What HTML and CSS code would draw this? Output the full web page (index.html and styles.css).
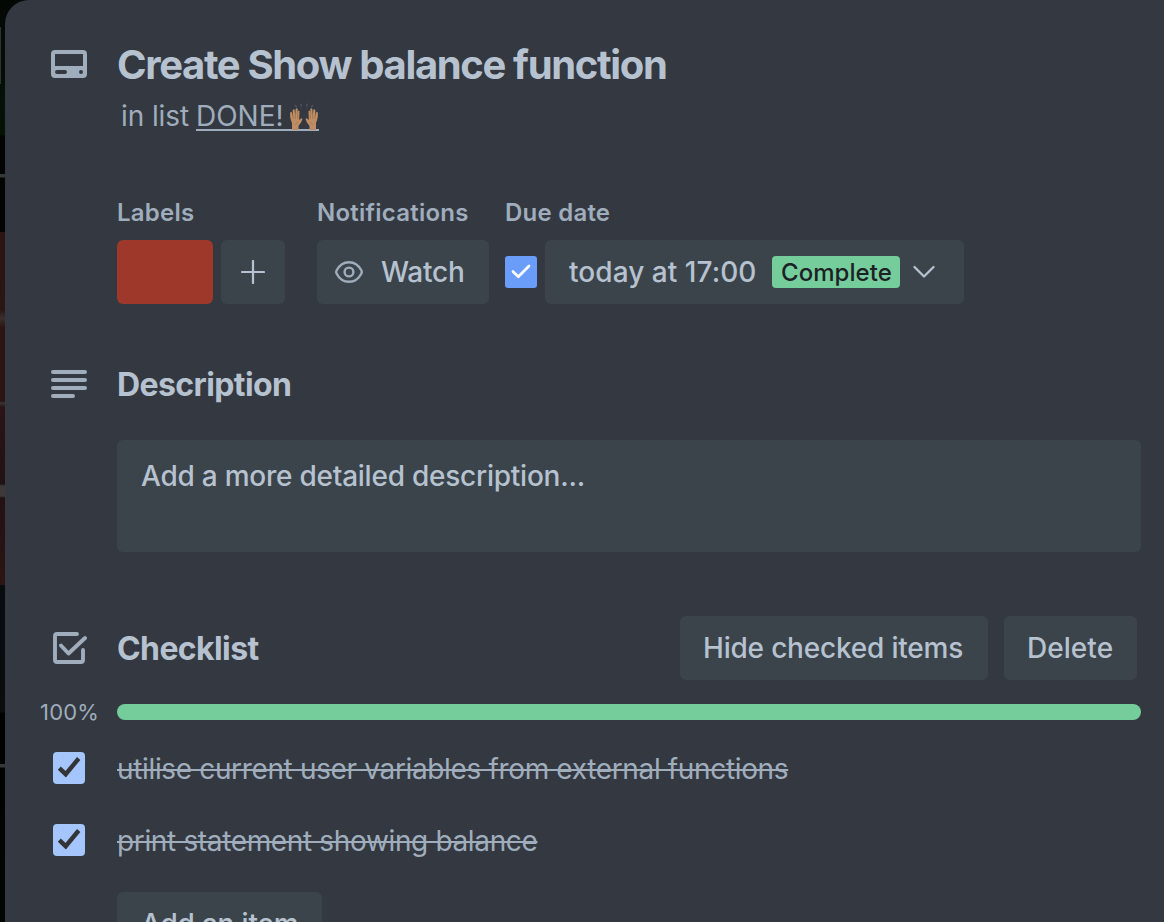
FILE: index.html
```html
<!DOCTYPE html>
<html lang="en">
<head>
<meta charset="utf-8">
<title>Create Show balance function</title>
<link rel="stylesheet" href="styles.css">
</head>
<body>
<div class="board"></div>
<main class="card">
  <header class="head">
    <svg class="icon card-icon" width="36" height="28" viewBox="0 0 36 28"><path fill="currentColor" fill-rule="evenodd" d="M4 0h28a4 4 0 0 1 4 4v20a4 4 0 0 1-4 4H4a4 4 0 0 1-4-4V4a4 4 0 0 1 4-4zM4 4v12h28V4zM6 20a2 2 0 0 0 0 4h8a2 2 0 0 0 0-4zM30 20a2 2 0 1 0 0 4a2 2 0 0 0 0-4z"/></svg>
    <div>
      <h1 class="title">Create Show balance function</h1>
      <p class="in-list"><span class="in">in list </span><a class="list-link"><span>DONE!</span>
        <svg class="hands" width="30" height="30" viewBox="0 0 30 30"><g stroke="#555b60" stroke-width="1.2" stroke-linecap="round"><path d="M6.500 3.500l1 1.500M12 2l.3 2M18 2l-.3 2M23.500 3.500l-1 1.500"/></g><path fill="#be8d63" d="M3 28V21C1.500 18 .8 14 1.200 10.500q.8-1.300 1.700 0l.7 4L3.700 8q1-1.600 2 0l.6 6L6.600 7q1.100-1.600 2.100 0v7.500L9 9q1-1.200 1.500.2L10.200 18l1.800-1.500q1.500-.6 1.300.9C12.500 20 10.500 22.500 9.500 24V28z"/><path d="M3.700 13l.6 4M6.400 13v4M8.900 13l-.2 4M9 20q-2 1-2.500 3" fill="none" stroke="#97683f" stroke-width=".5"/><g transform="matrix(-1 0 0 1 30 0)"><path fill="#be8d63" d="M3 28V21C1.500 18 .8 14 1.200 10.500q.8-1.300 1.700 0l.7 4L3.700 8q1-1.600 2 0l.6 6L6.600 7q1.100-1.600 2.100 0v7.500L9 9q1-1.200 1.500.2L10.200 18l1.800-1.500q1.500-.6 1.300.9C12.500 20 10.500 22.500 9.500 24V28z"/><path d="M3.700 13l.6 4M6.400 13v4M8.900 13l-.2 4M9 20q-2 1-2.500 3" fill="none" stroke="#97683f" stroke-width=".5"/></g></svg></a></p>
    </div>
  </header>

  <section class="meta">
    <div class="group">
      <h3 class="label">Labels</h3>
      <div class="row"><span class="swatch"></span><button class="btn add"><svg width="24" height="24" viewBox="0 0 24 24"><path d="M12 1v22M1 12h22" stroke="currentColor" stroke-width="2.200" stroke-linecap="round"/></svg></button></div>
    </div>
    <div class="group">
      <h3 class="label">Notifications</h3>
      <button class="btn watch"><svg class="icon" width="28" height="24" viewBox="0 0 28 24" fill="none" stroke="currentColor" stroke-width="2.400"><path d="M14 2.200C20 2.200 24 6 26.300 10.300Q27.200 12 26.300 13.700C24 18 20 21.800 14 21.800S4 18 1.700 13.700Q.8 12 1.700 10.300C4 6 8 2.200 14 2.200z"/><circle cx="14" cy="12" r="4.400"/></svg><span class="watch-text">Watch</span></button>
    </div>
    <div class="group">
      <h3 class="label">Due date</h3>
      <div class="row"><span class="check due-check"><svg width="32" height="32" viewBox="0 0 32 32"><path d="M8 15.500l5.300 5.200L24 10" fill="none" stroke="#fff" stroke-width="2.700" stroke-linecap="round" stroke-linejoin="round"/></svg></span><button class="btn due"><span class="due-text">today at 17:00</span><span class="badge">Complete</span><svg width="24" height="14" viewBox="0 0 24 14"><path d="M2.500 2L12 11.500L21.500 2" fill="none" stroke="currentColor" stroke-width="2.300" stroke-linecap="round" stroke-linejoin="round"/></svg></button></div>
    </div>
  </section>

  <section class="heading desc-heading">
    <svg class="icon" width="36" height="28" viewBox="0 0 36 28"><path d="M2 2h32M2 10h32M2 18h32M2 26h20" stroke="currentColor" stroke-width="4" stroke-linecap="round"/></svg>
    <h2 class="subtitle">Description</h2>
  </section>
  <div class="description">Add a more detailed description...</div>

  <section class="heading">
    <svg class="icon" width="36" height="32" viewBox="0 0 36 32"><path d="M26 2H6Q4 2 4 4V28Q4 30 6 30H30Q32 30 32 28V18M10 13.500l7.500 8L34 6" fill="none" stroke="currentColor" stroke-width="3.900" stroke-linecap="round" stroke-linejoin="round"/></svg>
    <h2 class="subtitle">Checklist</h2>
    <button class="btn hide">Hide checked items</button>
    <button class="btn delete">Delete</button>
  </section>
  <div class="progress"><span class="percent">100%</span><span class="bar"></span></div>

  <ul class="items">
    <li class="item"><span class="check"><svg width="32" height="32" viewBox="0 0 32 32"><path d="M6.300 16.200l6.400 6L25.700 6.500" fill="none" stroke="#343538" stroke-width="4.400"/></svg></span><span class="done">utilise current user variables from external functions</span></li>
    <li class="item"><span class="check"><svg width="32" height="32" viewBox="0 0 32 32"><path d="M6.300 16.200l6.400 6L25.700 6.500" fill="none" stroke="#343538" stroke-width="4.400"/></svg></span><span class="done">print statement showing balance</span></li>
  </ul>
  <button class="btn add-item">Add an item</button>
</main>
</body>
</html>
```
FILE: styles.css
```css
* { box-sizing: border-box; }
body {
  margin: 0;
  height: 922px;
  overflow: hidden;
  display: flex;
  background: #030603;
  font-family: Inter, "Liberation Sans", sans-serif;
  color: #b6c2cf;
}
h1, h2, h3, p, ul { margin: 0; padding: 0; }
svg { display: block; flex: none; }
button { border: 0; padding: 0; font: inherit; color: inherit; }
span, h1, h2, h3, button { white-space: nowrap; }

.board {
  position: absolute;
  width: 30px;
  height: 922px;
  background: linear-gradient(#030804 0, #061006 100px, #071207 135px, #020302 136px, #020302 174px, #34383c 174px, #34383c 177px, #020402 178px, #020302 232px, #2a1414 232px, #2a1615 310px, #39302d 318px, #2a1414 328px, #2a1414 401px, #3b3433 403px, #2a1416 407px, #241213 475px, #1d1413 484px, #3e3937 486px, #3e3937 496px, #241112 498px, #2b1515 585px, #080b10 585px, #0a0c0f 712px, #020301 713px, #020301 764px, #34383c 764px, #34383c 767px, #020301 768px, #020602 922px);
}
.board::before {
  content: "";
  display: block;
  width: 1px;
  height: 57px;
  margin-top: 27px;
  background: #2f3336;
}
.card {
  position: relative;
  margin-left: 5px;
  width: 1159px;
  height: 922px;
  overflow: hidden;
  border-top-left-radius: 24px;
  background: #343840;
  display: flex;
  flex-direction: column;
}
.card > * { flex: none; }
.icon { color: #9fadbc; }

.head { display: flex; height: 184px; padding: 40px 0 0 46px; gap: 30px; }
.card-icon { margin-top: 10px; }
.title { font-size: 40px; font-weight: 700; line-height: 50px; letter-spacing: -1.350px; }
.in-list { display: flex; margin: 8px 0 0 4px; font-size: 28px; line-height: 37px; color: #9fadbc; height: 33px; }
.in { width: 75px; letter-spacing: -0.100px; }
.list-link { display: flex; width: 123px; height: 33px; justify-content: space-between; border-bottom: 2px solid #9fadbc; }
.hands { margin-top: 4px; }

.meta { display: flex; padding-left: 112px; height: 120px; }
.group { margin-right: 16px; }
.group:first-child { margin-right: 32px; }
.label { height: 56px; padding-top: 12px; font-size: 24px; font-weight: 600; line-height: 34px; color: #9fadbc; width: 0; letter-spacing: 0.230px; }
.row { display: flex; gap: 8px; align-items: center; }
.btn {
  display: flex;
  flex: none;
  align-items: center;
  justify-content: flex-start;
  height: 64px;
  border-radius: 6px;
  background: #3c444b;
  font-size: 28px;
  font-weight: 550;
  line-height: 40px;
}
.swatch { width: 96px; height: 64px; border-radius: 6px; background: #9e382b; }
.add { width: 64px; justify-content: center; }
.watch { width: 172px; padding-left: 18px; gap: 18px; }
.watch-text { letter-spacing: -0.250px; }
.check { width: 32px; height: 32px; flex: none; border-radius: 4px; background: #a4c6fd; }
.due-check { background: #6a9cf9; border-radius: 3px; }
.due { width: 419px; padding-left: 24px; }
.due-text { width: 203px; text-align: left; letter-spacing: 0.050px; }
.badge { width: 128px; height: 32px; margin-right: 12px; padding-left: 9px; border-radius: 4px; background: #75cd9c; color: #1d2125; font-size: 24px; font-weight: 500; line-height: 33px; text-align: left; letter-spacing: 0.050px; }

.heading { display: flex; align-items: center; height: 64px; padding-left: 46px; }
.desc-heading { margin-top: 48px; }
.subtitle { margin-left: 30px; font-size: 32px; font-weight: 650; line-height: 40px; padding-top: 1px; letter-spacing: -0.600px; }
.description { width: 1024px; height: 112px; margin: 24px 0 64px 112px; padding: 16px 24px; border-radius: 6px; background: #3c444b; font-size: 28px; font-weight: 500; line-height: 40px; letter-spacing: -0.240px; }
.hide { width: 308px; margin-left: auto; padding-left: 23px; letter-spacing: -0.200px; }
.delete { width: 133px; margin: 0 27px 0 16px; padding-left: 23px; letter-spacing: 0.050px; }
.progress { display: flex; align-items: center; height: 64px; }
.percent { width: 112px; padding-left: 35px; font-size: 22px; letter-spacing: 0.200px; color: #9fadbc; }
.bar { width: 1024px; height: 16px; border-radius: 8px; background: #75cd9c; }

.items { list-style: none; height: 148px; }
.item { display: flex; align-items: center; height: 48px; margin-bottom: 24px; padding-left: 48px; gap: 32px; font-size: 28px; line-height: 40px; color: #9fadbc; letter-spacing: -0.350px; }
.done { padding-top: 1px; text-decoration: line-through; text-decoration-thickness: 2px; }
.add-item { width: 205px; margin-left: 112px; padding-left: 24px; letter-spacing: -0.200px; }
```
